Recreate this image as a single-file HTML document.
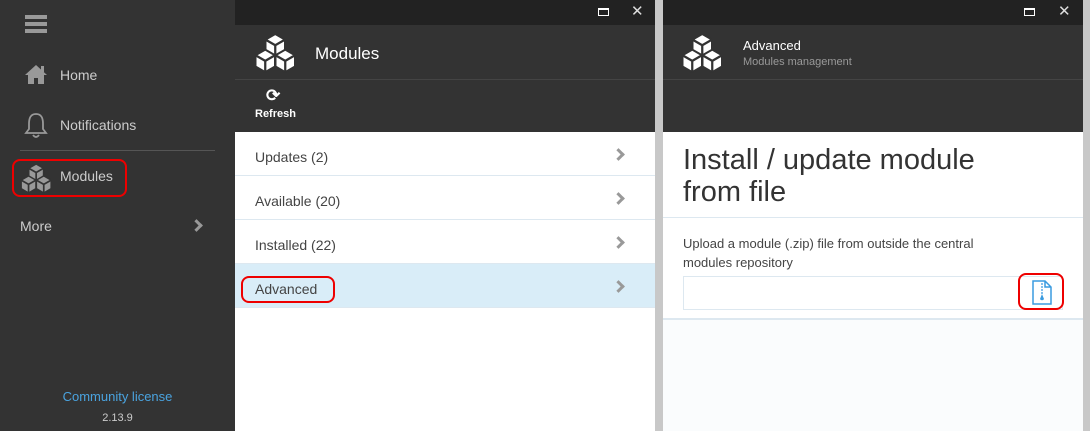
<!DOCTYPE html>
<html><head><style>
*{margin:0;padding:0;box-sizing:border-box}
body{width:1090px;height:431px;overflow:hidden;background:#c8c8c8;font-family:"Liberation Sans",sans-serif;position:relative}
.abs{position:absolute}
.side{left:0;top:0;width:235px;height:431px;background:#333}
.side .item{position:absolute;left:60px;color:#ccc;font-size:14px}
.tb{background:#222;height:25px}
.hd{background:#333}
.li{position:absolute;left:0;width:420px;height:44px;border-bottom:1px solid #dde8f0;color:#444;font-size:14px;padding:17px 0 0 20px}
.chev{position:absolute;right:32px;top:18px;width:9px;height:9px;border-right:3px solid #999;border-top:3px solid #999;transform:rotate(45deg)}
.red{position:absolute;border:2.5px solid #e00;border-radius:8px}
</style></head><body>
<svg width="0" height="0" style="position:absolute"><defs>
<g id="cube"><path d="M0 -9 L7.8 -4.5 L7.8 4.5 L0 9 L-7.8 4.5 L-7.8 -4.5 Z" stroke-width="1.6"/><path d="M0 0 L0 9 M0 0 L-7.8 -4.5 M0 0 L7.8 -4.5" fill="none" stroke-width="1.8"/></g>
</defs></svg>
<div class="abs side">
  <div class="abs" style="left:25px;top:15px;width:22px;height:4px;background:#999;box-shadow:0 7px 0 #999,0 14px 0 #999"></div>
  <svg class="abs" style="left:24px;top:63px" width="24" height="22" viewBox="0 0 24 22"><path d="M12 2 L1 12 L4 12 L4 21 L10 21 L10 15 L14 15 L14 21 L20 21 L20 12 L23 12 Z" fill="#999"/><rect x="17" y="3" width="3" height="6" fill="#999"/></svg>
  <div class="item" style="top:67px">Home</div>
  <svg class="abs" style="left:24px;top:111px" width="24" height="28" viewBox="0 0 24 28"><path d="M12 3 C6 3 5 8 5 13 L5 18 L2 22 L22 22 L19 18 L19 13 C19 8 18 3 12 3 Z M9 24 Q12 28 15 24" fill="none" stroke="#999" stroke-width="1.8"/></svg>
  <div class="item" style="top:117px">Notifications</div>
  <div class="abs" style="left:20px;top:150px;width:195px;height:1px;background:#555"></div>
  <svg class="abs" style="left:20px;top:164px" width="34" height="28" viewBox="0 0 34 28" fill="#999" stroke="#333"><g transform="scale(0.95)"><use href="#cube" x="17" y="9"/><use href="#cube" x="9" y="21.5"/><use href="#cube" x="25" y="21.5"/></g></svg>
  <div class="item" style="top:168px">Modules</div>
  <div class="red" style="left:12px;top:159px;width:115px;height:38px"></div>
  <div class="abs" style="left:20px;top:218px;color:#ccc;font-size:14px">More</div>
  <div class="abs" style="left:192px;top:221px;width:9px;height:9px;border-right:3px solid #999;border-top:3px solid #999;transform:rotate(45deg)"></div>
  <div class="abs" style="left:0;width:235px;top:389px;text-align:center;color:#4aa3df;font-size:13px">Community license</div>
  <div class="abs" style="left:0;width:235px;top:412px;text-align:center;color:#ccc;font-size:11px">2.13.9</div>
</div>
<!-- middle -->
<div class="abs" style="left:235px;top:0;width:420px;height:431px;background:#fff">
  <div class="tb" style="position:relative"><div class="abs" style="left:363px;top:8px;width:11px;height:8px;border:1.5px solid #fff;border-top-width:2.5px"></div><div class="abs" style="left:396px;top:2px;color:#ddd;font-size:15px">✕</div></div>
  <div class="hd" style="position:relative;height:55px;border-bottom:1px solid #444">
    <svg class="abs" style="left:19px;top:9px" width="46" height="40" viewBox="0 0 46 40" fill="#fff" stroke="#333"><g transform="scale(1.25)"><use href="#cube" x="17" y="9"/><use href="#cube" x="9" y="21.5"/><use href="#cube" x="25" y="21.5"/></g></svg>
    <div class="abs" style="left:80px;top:19px;color:#fff;font-size:17px">Modules</div>
  </div>
  <div class="hd" style="position:relative;height:52px">
    <div class="abs" style="left:31px;top:6px;color:#fff;font-size:17px;font-weight:bold">⟳</div>
    <div class="abs" style="left:20px;top:28px;color:#fff;font-size:11px;font-weight:bold">Refresh</div>
  </div>
  <div class="li" style="top:132px">Updates (2)<div class="chev"></div></div>
  <div class="li" style="top:176px">Available (20)<div class="chev"></div></div>
  <div class="li" style="top:220px">Installed (22)<div class="chev"></div></div>
  <div class="li" style="top:264px;background:#d9edf8">Advanced<div class="chev"></div></div>
  <div class="red" style="left:6px;top:276px;width:94px;height:27px"></div>
</div>
<!-- right -->
<div class="abs" style="left:663px;top:0;width:420px;height:431px;background:#fafcfd">
  <div class="tb" style="position:relative"><div class="abs" style="left:361px;top:8px;width:11px;height:8px;border:1.5px solid #fff;border-top-width:2.5px"></div><div class="abs" style="left:395px;top:2px;color:#ddd;font-size:15px">✕</div></div>
  <div class="hd" style="position:relative;height:55px;border-bottom:1px solid #444">
    <svg class="abs" style="left:18px;top:9px" width="46" height="40" viewBox="0 0 46 40" fill="#fff" stroke="#333"><g transform="scale(1.25)"><use href="#cube" x="17" y="9"/><use href="#cube" x="9" y="21.5"/><use href="#cube" x="25" y="21.5"/></g></svg>
    <div class="abs" style="left:80px;top:13px;color:#fff;font-size:13px">Advanced</div>
    <div class="abs" style="left:80px;top:31px;color:#999;font-size:11px">Modules management</div>
  </div>
  <div class="hd" style="height:52px"></div>
  <div style="background:#fff;height:188px;border-bottom:2px solid #dde8f0;position:relative">
    <div style="padding:12px 60px 0 20px;font-size:29px;color:#333;line-height:32px;height:86px;border-bottom:1px solid #dde8f0">Install / update module from file</div>
    <div class="abs" style="left:20px;top:102px;font-size:13px;color:#444;line-height:19px;width:330px">Upload a module (.zip) file from outside the central modules repository</div>
    <div class="abs" style="left:20px;top:144px;width:380px;height:34px;border:1px solid #dde8f0"></div>
    <svg class="abs" style="left:369px;top:148px" width="20" height="25" viewBox="0 0 20 25"><path d="M1 1 L13 1 L19 7 L19 24 L1 24 Z M13 1 L13 7 L19 7" fill="none" stroke="#3a9be0" stroke-width="1.5"/><path d="M9 4 h2 M9 7 h2 M9 10 h2 M9 13 h2" stroke="#3a9be0" stroke-width="1.3"/><path d="M10 14 L8 19 A2.2 2.2 0 0 0 12 19 Z" fill="#3a9be0"/></svg>
  </div>
  <div class="red" style="left:355px;top:273px;width:46px;height:37px"></div>
</div>
</body></html>
